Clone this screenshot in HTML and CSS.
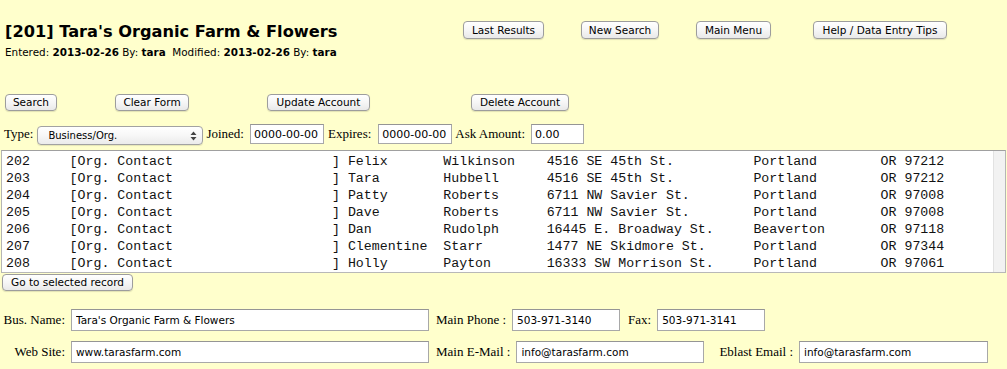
FILE: index.html
```html
<!DOCTYPE html>
<html>
<head>
<meta charset="utf-8">
<title>Account</title>
<link rel="stylesheet" href="styles.css">
</head>
<body>
<div class="header">
  <div class="titleblock">
    <h1 class="title">[201] Tara's Organic Farm &amp; Flowers</h1>
    <div class="meta">Entered: <b>2013-02-26</b> By: <b>tara</b>&nbsp; Modified: <b>2013-02-26</b> By: <b>tara</b></div>
  </div>
  <div class="topnav">
    <button class="btn b-last">Last Results</button>
    <button class="btn b-new">New Search</button>
    <button class="btn b-menu">Main Menu</button>
    <button class="btn b-help">Help / Data Entry Tips</button>
  </div>
</div>

<div class="actions">
  <button class="btn b-search">Search</button>
  <button class="btn b-clear">Clear Form</button>
  <button class="btn b-update">Update Account</button>
  <button class="btn b-delete">Delete Account</button>
</div>

<div class="typerow">
  <span class="lbl l-type">Type:</span>
  <span class="selectwrap">
    <span class="selectbox">Business/Org.</span>
    <svg class="selarrow" width="7" height="10" viewBox="0 0 7 10"><path d="M3.5 0.5 L6.5 4 L0.5 4 Z M3.5 9.5 L6.5 6 L0.5 6 Z" fill="#444"/></svg>
  </span>
  <span class="lbl l-joined">Joined:</span>
  <input class="field f-date f-joined" value="0000-00-00">
  <span class="lbl l-expires">Expires:</span>
  <input class="field f-date f-expires" value="0000-00-00">
  <span class="lbl l-ask">Ask Amount:</span>
  <input class="field f-ask" value="0.00">
</div>

<div class="listbox">
  <div class="listrows">
    <div class="lrow"><span class="c-id">202</span><span class="c-type">[Org. Contact</span><span class="c-br">]</span><span class="c-first">Felix</span><span class="c-last">Wilkinson</span><span class="c-addr">4516 SE 45th St.</span><span class="c-city">Portland</span><span class="c-st">OR 97212</span></div>
    <div class="lrow"><span class="c-id">203</span><span class="c-type">[Org. Contact</span><span class="c-br">]</span><span class="c-first">Tara</span><span class="c-last">Hubbell</span><span class="c-addr">4516 SE 45th St.</span><span class="c-city">Portland</span><span class="c-st">OR 97212</span></div>
    <div class="lrow"><span class="c-id">204</span><span class="c-type">[Org. Contact</span><span class="c-br">]</span><span class="c-first">Patty</span><span class="c-last">Roberts</span><span class="c-addr">6711 NW Savier St.</span><span class="c-city">Portland</span><span class="c-st">OR 97008</span></div>
    <div class="lrow"><span class="c-id">205</span><span class="c-type">[Org. Contact</span><span class="c-br">]</span><span class="c-first">Dave</span><span class="c-last">Roberts</span><span class="c-addr">6711 NW Savier St.</span><span class="c-city">Portland</span><span class="c-st">OR 97008</span></div>
    <div class="lrow"><span class="c-id">206</span><span class="c-type">[Org. Contact</span><span class="c-br">]</span><span class="c-first">Dan</span><span class="c-last">Rudolph</span><span class="c-addr">16445 E. Broadway St.</span><span class="c-city">Beaverton</span><span class="c-st">OR 97118</span></div>
    <div class="lrow"><span class="c-id">207</span><span class="c-type">[Org. Contact</span><span class="c-br">]</span><span class="c-first">Clementine</span><span class="c-last">Starr</span><span class="c-addr">1477 NE Skidmore St.</span><span class="c-city">Portland</span><span class="c-st">OR 97344</span></div>
    <div class="lrow"><span class="c-id">208</span><span class="c-type">[Org. Contact</span><span class="c-br">]</span><span class="c-first">Holly</span><span class="c-last">Payton</span><span class="c-addr">16333 SW Morrison St.</span><span class="c-city">Portland</span><span class="c-st">OR 97061</span></div>
  </div>
  <div class="scrolltrack"></div>
</div>

<div class="gorow">
  <button class="btn b-go">Go to selected record</button>
</div>

<div class="frow frow-1">
  <span class="flabel">Bus. Name:</span>
  <input class="field f-wide" value="Tara's Organic Farm &amp; Flowers">
  <span class="lbl l-gap7">Main Phone :</span>
  <input class="field f-phone" value="503-971-3140">
  <span class="lbl l-fax">Fax:</span>
  <input class="field f-phone" value="503-971-3141">
</div>
<div class="frow frow-2">
  <span class="flabel">Web Site:</span>
  <input class="field f-wide" value="www.tarasfarm.com">
  <span class="lbl l-gap7">Main E-Mail :</span>
  <input class="field f-email" value="info@tarasfarm.com">
  <span class="lbl l-eblast">Eblast Email :</span>
  <input class="field f-email2" value="info@tarasfarm.com">
</div>
</body>
</html>
```

FILE: styles.css
```css
html, body {
  margin: 0;
  padding: 0;
  background: #ffffcc;
}
body {
  font-family: "Liberation Serif", "Times New Roman", serif;
  font-size: 13px;
  color: #000;
  width: 1007px;
  height: 369px;
  overflow: hidden;
}

/* header */
.header {
  display: flex;
  align-items: flex-start;
}
.titleblock {
  flex: 0 0 458px;
  padding-left: 5px;
  padding-top: 22px;
}
.title {
  margin: 0;
  font-family: "DejaVu Sans", Verdana, sans-serif;
  font-weight: bold;
  font-size: 16.2px;
  line-height: 20px;
  white-space: nowrap;
}
.meta {
  margin-top: 3px;
  font-family: "DejaVu Sans", Verdana, sans-serif;
  font-size: 10.4px;
  line-height: 14px;
  white-space: nowrap;
}
.topnav {
  display: flex;
  margin-top: 21px;
}

/* buttons */
.btn {
  box-sizing: border-box;
  height: 18px;
  padding: 0;
  margin: 0;
  border: 1px solid #9d9d9d;
  border-radius: 4px;
  background: linear-gradient(#ffffff 0%, #f6f6f6 50%, #e9e9e9 100%);
  box-shadow: 0 1px 1px rgba(0, 0, 0, 0.12);
  font-family: "DejaVu Sans", "Lucida Grande", sans-serif;
  font-size: 10.5px;
  line-height: 15px;
  color: #000;
  text-align: center;
  white-space: nowrap;
}
.b-last { width: 81px; }
.b-new { width: 78px; margin-left: 37px; }
.b-menu { width: 75px; margin-left: 37px; }
.b-help { width: 134px; margin-left: 42px; }

.actions {
  display: flex;
  margin-top: 35px;
  padding-left: 5px;
}
.b-search { width: 52px; height: 17px; }
.b-clear { width: 74px; height: 17px; margin-left: 58px; }
.b-update { width: 103px; height: 17px; margin-left: 78px; }
.b-delete { width: 98px; height: 17px; margin-left: 101px; }

/* type row */
.typerow {
  display: flex;
  align-items: center;
  margin-top: 12px;
  padding-left: 4px;
  height: 22px;
}
.lbl {
  white-space: nowrap;
}
.selectwrap {
  position: relative;
  display: block;
  margin-left: 4px;
  margin-top: 3px;
}
.selectbox {
  box-sizing: border-box;
  display: block;
  width: 166px;
  height: 19px;
  border: 1px solid #a2a2a2;
  border-radius: 4px;
  background: linear-gradient(#ffffff 0%, #f7f7f7 50%, #ebebeb 100%);
  box-shadow: 0 1px 1px rgba(0, 0, 0, 0.1);
  padding-left: 10px;
  font-family: "DejaVu Sans", "Lucida Grande", sans-serif;
  font-size: 10px;
  line-height: 17px;
}
.selarrow {
  position: absolute;
  right: 6px;
  top: 5px;
}
.l-joined { margin-left: 3px; }
.l-expires { margin-left: 4px; }
.l-ask { margin-left: 3px; }

.field {
  box-sizing: border-box;
  margin: 0;
  border: 1px solid #a8a8a8;
  border-top-color: #959595;
  background: #fff;
  padding: 0 0 0 4px;
  font-family: "DejaVu Sans", "Lucida Grande", sans-serif;
  font-size: 10.5px;
  color: #000;
  outline: none;
}
.f-date {
  width: 74px;
  height: 20px;
  font-size: 11px;
  padding-left: 3px;
}
.f-joined { margin-left: 6px; }
.f-expires { margin-left: 7px; }
.f-ask {
  width: 53px;
  height: 20px;
  margin-left: 6px;
  font-size: 11px;
  padding-left: 3px;
}

/* list */
.listbox {
  display: flex;
  margin: 5px 1px 0 1px;
  height: 123px;
  box-sizing: border-box;
  border: 1px solid #a0a0a0;
  border-left-color: #b5b5b5;
  border-right-color: #b5b5b5;
  border-bottom-color: #b8b8b8;
  background: #fff;
}
.listrows {
  flex: 1;
  padding: 2px 0 0 4px;
  font-family: "Liberation Mono", "Courier New", monospace;
  font-size: 13.25px;
  line-height: 17px;
  color: #111;
  white-space: nowrap;
  overflow: hidden;
}
.lrow {
  height: 17px;
  white-space: nowrap;
}
.lrow span {
  display: inline-block;
  white-space: pre;
}
.c-id { width: 8ch; }
.c-type { width: 33ch; }
.c-br { width: 2ch; }
.c-first { width: 12ch; }
.c-last { width: 13ch; }
.c-addr { width: 26ch; }
.c-city { width: 16ch; }
.scrolltrack {
  flex: 0 0 11px;
  background: #f2f2f2;
  border-left: 1px solid #e2e2e2;
}

.gorow {
  padding-left: 2px;
  margin-top: 1px;
}
.b-go { width: 131px; height: 17px; }

/* bottom fields */
.frow {
  display: flex;
  align-items: center;
}
.frow-1 { margin-top: 18px; }
.frow-2 { margin-top: 10px; }
.flabel {
  width: 65px;
  text-align: right;
  white-space: nowrap;
}
.f-wide {
  width: 358px;
  height: 22px;
  margin-left: 6px;
}
.l-gap7 { margin-left: 7px; }
.f-phone {
  width: 108px;
  height: 22px;
  margin-left: 6px;
}
.l-fax { margin-left: 8px; }
.f-email {
  width: 188px;
  height: 22px;
  margin-left: 6px;
}
.l-eblast { margin-left: 15px; }
.f-email2 {
  width: 189px;
  height: 22px;
  margin-left: 6px;
}
```
